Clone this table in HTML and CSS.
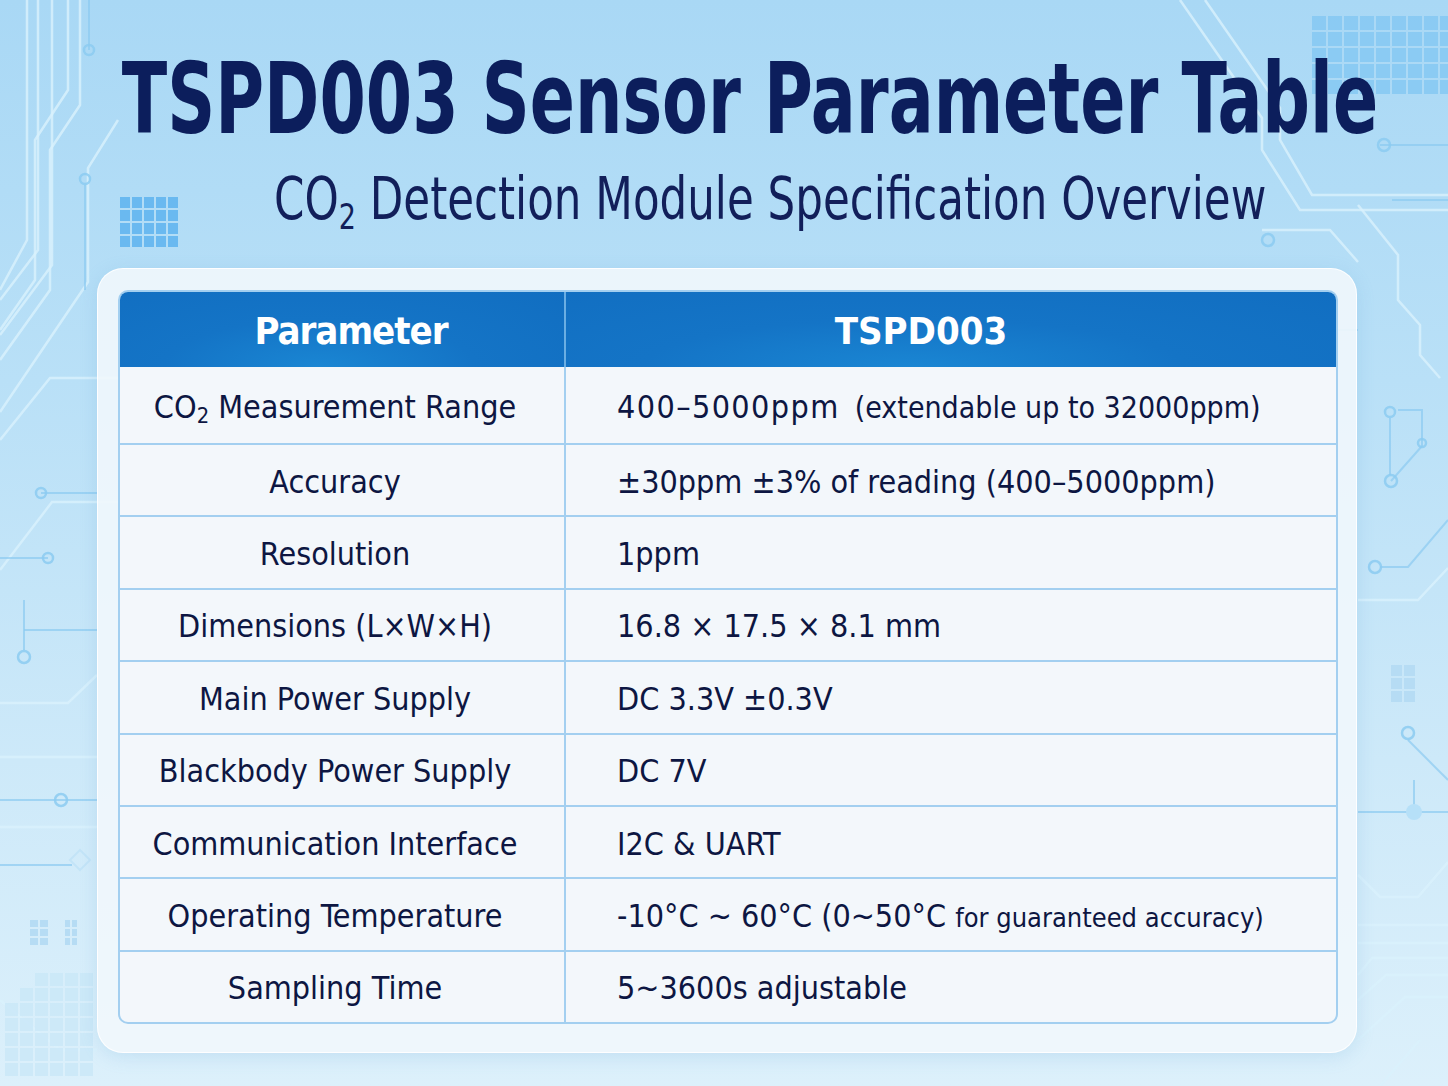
FILE: index.html
```html
<!DOCTYPE html>
<html lang="en">
<head>
<meta charset="utf-8">
<title>TSPD003 Sensor Parameter Table</title>
<link rel="stylesheet" href="styles.css">
</head>
<body>
<div class="page">
  <svg class="circuit" width="1448" height="1086" viewBox="0 0 1448 1086" aria-hidden="true">
    <g class="trace-light">
      <path d="M27 0 V240 L0 290"/>
      <path d="M38 0 V250 L0 300"/>
      <path d="M52 0 V265 L0 335"/>
      <path d="M68 0 V90 L35 140 V280 L0 330"/>
      <path d="M80 0 V105 L50 150 V290 L0 360"/>
      <path d="M118 120 L88 168 V282 L0 412"/>
      <path d="M120 378 H50 L0 440"/>
      <path d="M120 502 H52 L0 570"/>
      <path d="M1180 0 L1262 118 V150 L1300 210 H1448"/>
      <path d="M1205 0 L1280 108 V140 L1312 195 H1448"/>
      <path d="M1262 230 H1330 L1358 262"/>
      <path d="M1358 205 L1398 255 V300 L1420 325 V355 L1440 378"/>
      <path d="M1358 600 H1418 L1448 568"/>
      <path d="M1358 875 L1380 897 H1418 L1448 862"/>
      <path d="M1358 925 H1448"/>
      <path d="M1358 943 H1448"/>
      <path d="M1358 975 L1372 958 H1448"/>
      <path d="M1358 1000 L1386 975 H1448"/>
      <path d="M1358 1040 L1405 997 H1448"/>
      <path d="M1420 1040 L1380 1086"/>
      <path d="M0 757 H97"/>
      <path d="M0 827 H97"/>
      <path d="M0 703 H68 L97 675"/>
      <path d="M0 1000 L60 1050 H97"/>
    </g>
    <g class="trace-blue">
      <path d="M89 0 V50"/>
      <path d="M85 185 V290"/>
      <path d="M41 493 H97"/>
      <path d="M48 558 H0"/>
      <path d="M24 600 V650"/>
      <path d="M24 630 H97"/>
      <path d="M0 800 H97"/>
      <path d="M0 865 H72"/>
      <path d="M1380 145 H1448"/>
      <path d="M1392 200 H1448"/>
      <path d="M1390 418 V475"/>
      <path d="M1391 481 L1422 446 V410 H1398"/>
      <path d="M1380 567 H1408 L1448 520"/>
      <path d="M1358 812 H1448"/>
      <path d="M1414 780 V812"/>
      <path d="M1408 740 L1448 780"/>
      <path d="M1300 330 L1358 330"/>
    </g>
    <g class="nodes">
      <circle cx="89" cy="50" r="5"/>
      <circle cx="85" cy="179" r="5"/>
      <circle cx="41" cy="493" r="5"/>
      <circle cx="48" cy="558" r="5"/>
      <circle cx="24" cy="657" r="6"/>
      <circle cx="61" cy="800" r="6"/>
      <circle cx="1384" cy="145" r="6"/>
      <circle cx="1268" cy="240" r="6"/>
      <circle cx="1390" cy="412" r="5"/>
      <circle cx="1391" cy="481" r="6"/>
      <circle cx="1422" cy="443" r="4"/>
      <circle cx="1375" cy="567" r="6"/>
      <circle cx="1408" cy="733" r="6"/>
    </g>
    <circle class="node-fill" cx="1414" cy="812" r="8"/>
    <path class="diamond" d="M80 850 L90 860 L80 870 L70 860 Z"/>
    <g class="grid-strong">
      <rect x="120" y="197" width="10" height="11"/><rect x="132" y="197" width="10" height="11"/><rect x="144" y="197" width="10" height="11"/><rect x="156" y="197" width="10" height="11"/><rect x="168" y="197" width="10" height="11"/>
      <rect x="120" y="210" width="10" height="11"/><rect x="132" y="210" width="10" height="11"/><rect x="144" y="210" width="10" height="11"/><rect x="156" y="210" width="10" height="11"/><rect x="168" y="210" width="10" height="11"/>
      <rect x="120" y="223" width="10" height="11"/><rect x="132" y="223" width="10" height="11"/><rect x="144" y="223" width="10" height="11"/><rect x="156" y="223" width="10" height="11"/><rect x="168" y="223" width="10" height="11"/>
      <rect x="120" y="236" width="10" height="11"/><rect x="132" y="236" width="10" height="11"/><rect x="144" y="236" width="10" height="11"/><rect x="156" y="236" width="10" height="11"/><rect x="168" y="236" width="10" height="11"/>
    </g>
    <g class="grid-soft">
      <rect x="1312" y="16" width="14" height="14"/><rect x="1328" y="16" width="14" height="14"/><rect x="1344" y="16" width="14" height="14"/><rect x="1360" y="16" width="14" height="14"/><rect x="1376" y="16" width="14" height="14"/><rect x="1392" y="16" width="14" height="14"/><rect x="1408" y="16" width="14" height="14"/><rect x="1424" y="16" width="14" height="14"/><rect x="1440" y="16" width="14" height="14"/>
      <rect x="1312" y="32" width="14" height="14"/><rect x="1328" y="32" width="14" height="14"/><rect x="1344" y="32" width="14" height="14"/><rect x="1360" y="32" width="14" height="14"/><rect x="1376" y="32" width="14" height="14"/><rect x="1392" y="32" width="14" height="14"/><rect x="1408" y="32" width="14" height="14"/><rect x="1424" y="32" width="14" height="14"/><rect x="1440" y="32" width="14" height="14"/>
      <rect x="1312" y="48" width="14" height="14"/><rect x="1328" y="48" width="14" height="14"/><rect x="1344" y="48" width="14" height="14"/><rect x="1360" y="48" width="14" height="14"/><rect x="1376" y="48" width="14" height="14"/><rect x="1392" y="48" width="14" height="14"/><rect x="1408" y="48" width="14" height="14"/><rect x="1424" y="48" width="14" height="14"/><rect x="1440" y="48" width="14" height="14"/>
      <rect x="1312" y="64" width="14" height="14"/><rect x="1328" y="64" width="14" height="14"/><rect x="1344" y="64" width="14" height="14"/><rect x="1360" y="64" width="14" height="14"/><rect x="1376" y="64" width="14" height="14"/><rect x="1392" y="64" width="14" height="14"/><rect x="1408" y="64" width="14" height="14"/><rect x="1424" y="64" width="14" height="14"/><rect x="1440" y="64" width="14" height="14"/>
      <rect x="1312" y="80" width="14" height="14"/><rect x="1328" y="80" width="14" height="14"/><rect x="1344" y="80" width="14" height="14"/><rect x="1360" y="80" width="14" height="14"/><rect x="1376" y="80" width="14" height="14"/><rect x="1392" y="80" width="14" height="14"/><rect x="1408" y="80" width="14" height="14"/><rect x="1424" y="80" width="14" height="14"/><rect x="1440" y="80" width="14" height="14"/>
    </g>
    <g class="grid-faint">
      <rect x="30" y="920" width="8" height="7"/><rect x="40" y="920" width="8" height="7"/>
      <rect x="30" y="929" width="8" height="7"/><rect x="40" y="929" width="8" height="7"/>
      <rect x="30" y="938" width="8" height="7"/><rect x="40" y="938" width="8" height="7"/>
      <rect x="65" y="920" width="5" height="7"/><rect x="72" y="920" width="5" height="7"/>
      <rect x="65" y="929" width="5" height="7"/><rect x="72" y="929" width="5" height="7"/>
      <rect x="65" y="938" width="5" height="7"/><rect x="72" y="938" width="5" height="7"/>
      <rect x="1391" y="665" width="11" height="11"/><rect x="1404" y="665" width="11" height="11"/>
      <rect x="1391" y="678" width="11" height="11"/><rect x="1404" y="678" width="11" height="11"/>
      <rect x="1391" y="691" width="11" height="11"/><rect x="1404" y="691" width="11" height="11"/>
    </g>
    <g class="grid-bottom">
      <rect x="35" y="973" width="13" height="13"/><rect x="50" y="973" width="13" height="13"/><rect x="65" y="973" width="13" height="13"/><rect x="80" y="973" width="13" height="13"/>
      <rect x="20" y="988" width="13" height="13"/><rect x="35" y="988" width="13" height="13"/><rect x="50" y="988" width="13" height="13"/><rect x="65" y="988" width="13" height="13"/><rect x="80" y="988" width="13" height="13"/>
      <rect x="5" y="1003" width="13" height="13"/><rect x="20" y="1003" width="13" height="13"/><rect x="35" y="1003" width="13" height="13"/><rect x="50" y="1003" width="13" height="13"/><rect x="65" y="1003" width="13" height="13"/><rect x="80" y="1003" width="13" height="13"/>
      <rect x="5" y="1018" width="13" height="13"/><rect x="20" y="1018" width="13" height="13"/><rect x="35" y="1018" width="13" height="13"/><rect x="50" y="1018" width="13" height="13"/><rect x="65" y="1018" width="13" height="13"/><rect x="80" y="1018" width="13" height="13"/>
      <rect x="5" y="1033" width="13" height="13"/><rect x="20" y="1033" width="13" height="13"/><rect x="35" y="1033" width="13" height="13"/><rect x="50" y="1033" width="13" height="13"/><rect x="65" y="1033" width="13" height="13"/><rect x="80" y="1033" width="13" height="13"/>
      <rect x="5" y="1048" width="13" height="13"/><rect x="20" y="1048" width="13" height="13"/><rect x="35" y="1048" width="13" height="13"/><rect x="50" y="1048" width="13" height="13"/><rect x="65" y="1048" width="13" height="13"/><rect x="80" y="1048" width="13" height="13"/>
      <rect x="5" y="1063" width="13" height="13"/><rect x="20" y="1063" width="13" height="13"/><rect x="35" y="1063" width="13" height="13"/><rect x="50" y="1063" width="13" height="13"/><rect x="65" y="1063" width="13" height="13"/><rect x="80" y="1063" width="13" height="13"/>
    </g>
  </svg>

  <header class="hero">
    <h1 class="title">TSPD003 Sensor Parameter Table</h1>
    <p class="subtitle">CO<sub>2</sub> Detection Module Specification Overview</p>
  </header>

  <main class="card">
    <table class="spec">
      <thead>
        <tr>
          <th class="th-param">Parameter</th>
          <th class="th-model">TSPD003</th>
        </tr>
      </thead>
      <tbody>
        <tr class="row-first">
          <td class="param">CO<sub>2</sub> Measurement Range</td>
          <td class="value"><span class="range">400–5000ppm</span> <span class="note-wide">(extendable up to 32000ppm)</span></td>
        </tr>
        <tr>
          <td class="param">Accuracy</td>
          <td class="value">±30ppm ±3% of reading (400–5000ppm)</td>
        </tr>
        <tr>
          <td class="param">Resolution</td>
          <td class="value">1ppm</td>
        </tr>
        <tr>
          <td class="param">Dimensions (L×W×H)</td>
          <td class="value">16.8 × 17.5 × 8.1 mm</td>
        </tr>
        <tr>
          <td class="param">Main Power Supply</td>
          <td class="value">DC 3.3V ±0.3V</td>
        </tr>
        <tr>
          <td class="param">Blackbody Power Supply</td>
          <td class="value">DC 7V</td>
        </tr>
        <tr>
          <td class="param">Communication Interface</td>
          <td class="value">I2C &amp; UART</td>
        </tr>
        <tr>
          <td class="param">Operating Temperature</td>
          <td class="value">-10°C ~ 60°C (0~50°C <span class="note-small">for guaranteed accuracy)</span></td>
        </tr>
        <tr>
          <td class="param">Sampling Time</td>
          <td class="value">5~3600s adjustable</td>
        </tr>
      </tbody>
    </table>
  </main>
</div>
</body>
</html>
```

FILE: styles.css
```css
* {
  box-sizing: border-box;
}

html, body {
  margin: 0;
  padding: 0;
}

body {
  width: 1448px;
  height: 1086px;
  overflow: hidden;
  font-family: "DejaVu Sans Condensed", "DejaVu Sans", sans-serif;
  font-stretch: condensed;
  color: #0d1642;
}

.page {
  position: relative;
  width: 1448px;
  height: 1086px;
  overflow: hidden;
  background: linear-gradient(180deg, #a9d8f5 0%, #b9e0f7 35%, #cde9f9 70%, #dcf0fb 100%);
}

.circuit {
  position: absolute;
  left: 0;
  top: 0;
  z-index: 0;
}

.trace-light path {
  fill: none;
  stroke: #d9f1fd;
  stroke-width: 2.5;
  opacity: 0.8;
}

.trace-blue path {
  fill: none;
  stroke: #8ccbf1;
  stroke-width: 2;
  opacity: 0.7;
}

.nodes circle {
  fill: none;
  stroke: #8ccbf1;
  stroke-width: 2.5;
  opacity: 0.85;
}

.node-fill {
  fill: #b6e0f8;
}

.diamond {
  fill: none;
  stroke: #c3e4f7;
  stroke-width: 2;
}

.grid-strong rect {
  fill: #5db3ef;
  opacity: 0.85;
}

.grid-soft rect {
  fill: #80c6f1;
  opacity: 0.75;
}

.grid-faint rect {
  fill: #b6dcf4;
}

.grid-bottom rect {
  fill: #c9e7f8;
  opacity: 0.8;
}

.hero {
  position: relative;
  z-index: 1;
  display: flex;
  flex-direction: column;
  align-items: center;
  padding: 50px 0 0 52px;
}

.title {
  margin: 0;
  font-size: 98px;
  line-height: 1;
  font-weight: 700;
  color: #0c1e5c;
  white-space: nowrap;
  flex: none;
  transform: scaleX(0.756);
  transform-origin: 50% 50%;
}

.subtitle {
  margin: 22px 0 0 40px;
  font-size: 58px;
  line-height: 1;
  font-weight: 400;
  color: #121f5a;
  white-space: nowrap;
  flex: none;
  transform: scaleX(0.835);
  transform-origin: 50% 50%;
}

.subtitle sub {
  font-size: 0.62em;
  vertical-align: -0.28em;
  line-height: 0;
}

.card {
  position: relative;
  z-index: 1;
  margin: 40px 0 0 97px;
  width: 1260px;
  height: 785px;
  padding: 21px 20px 0 20px;
  background: rgba(241, 247, 252, 0.9);
  border: 1px solid rgba(255, 255, 255, 0.9);
  border-radius: 26px;
  box-shadow: 0 4px 18px rgba(90, 160, 210, 0.18);
}

.spec {
  width: 1220px;
  border-collapse: separate;
  border-spacing: 0;
  border: 2px solid #a3cff0;
  border-radius: 10px;
  overflow: hidden;
  background: #f3f7fb;
}

.spec th {
  height: 75px;
  padding: 0;
  background: radial-gradient(ellipse at 45% 100%, #1a86d3 0%, #1474c6 45%, #116ec1 100%);
  color: #ffffff;
  font-size: 38px;
  font-weight: 700;
  text-align: center;
  line-height: 1;
}

.th-param {
  width: 446px;
  padding: 3px 0 0 18px !important;
  letter-spacing: -1px;
  border-right: 2px solid #6aaee3;
}

.th-model {
  padding: 3px 60px 0 0 !important;
}

.spec td {
  height: 72.4px;
  padding: 3px 0 0;
  font-size: 32px;
  line-height: 1;
  color: #0d1642;
  border-top: 2px solid #a3cff0;
  vertical-align: middle;
}

.spec td.param {
  text-align: center;
  padding-right: 14px;
  border-right: 2px solid #a3cff0;
}

.spec td.value {
  text-align: left;
  padding-left: 51px;
}

.spec td sub {
  font-size: 0.68em;
  vertical-align: -0.25em;
  line-height: 0;
}

.range {
  letter-spacing: 1.4px;
}

.note-wide {
  font-size: 30px;
  margin-left: 6px;
}

.note-small {
  font-size: 27px;
}

.row-first td {
  height: 76px;
  border-top: none;
}
```
